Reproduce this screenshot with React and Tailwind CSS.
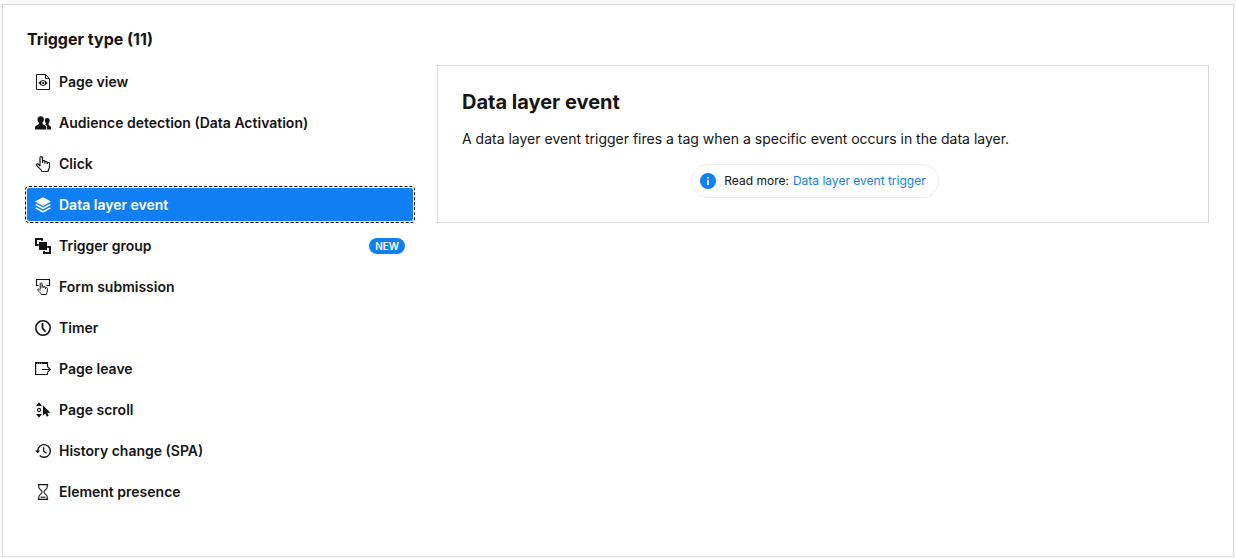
import React from "react";

function Icon({ children }) {
  return (
    <svg viewBox="0 0 16 16" className="size-4 shrink-0" fill="none" stroke="currentColor" aria-hidden="true">
      {children}
    </svg>
  );
}

const icons = {
  page: (
    <Icon>
      <path d="M1.500 .5h9L14.500 4.500v11h-13z" strokeWidth="1" />
      <path d="M10.500 .5v4h4" strokeWidth="1" />
      <path d="M3.400 9Q8 3 12.600 9 8 15 3.400 9z" fill="currentColor" stroke="none" />
      <circle cx="8" cy="9" r="2" fill="white" stroke="none" />
      <circle cx="8" cy="9" r="1.100" fill="currentColor" stroke="none" />
    </Icon>
  ),
  audience: (
    <Icon>
      <g fill="currentColor" stroke="none">
        <path d="M5.700 1.200c2.200 0 3.300 1.300 3.200 3.100-.1 1.600-.7 2.600-1.300 3.300v1.400c0 .7 3.700 1.300 3.700 3.400v2.200H0v-2.200c0-2.100 3.800-2.500 3.800-3.400V7.600C3.200 6.900 2.600 5.900 2.500 4.300 2.400 2.500 3.500 1.200 5.700 1.200z" />
        <path d="M12.100 3c1.900 0 2.700 1.100 2.600 2.600-.1 1.300-.5 2.200-1.100 2.800v1.300c0 .7 2.400 1 2.400 2.700v2.200h-3.900v-2.300c0-1.400-1-2.300-1.900-2.800.6-.2.800-.5.800-1V8.400c-.6-.6-1.100-1.500-1.200-2.800C9.700 4.100 10.400 3 12.100 3z" />
      </g>
    </Icon>
  ),
  click: (
    <Icon>
      <path
        d="M5 10.200V1.900a1.250 1.250 0 0 1 2.500 0v5M7.500 5.300c.2-.9 2.200-.9 2.400.2v1.900M9.900 6c.3-.8 2.100-.7 2.300.3v1.600M12.200 6.900c.4-.8 2.300-.5 2.300.7v3.100c0 1.700-1.200 2.500-1.500 4.800H6.900C6.500 13.400 3 11.600 1.700 9.300c-.7-1.300.9-2 1.700-1.100L5 10.100"
        strokeWidth="1.200"
        strokeLinejoin="round"
      />
    </Icon>
  ),
  layers: (
    <Icon>
      <g fill="currentColor" stroke="none">
        <path d="M8 .2 16 4.600 8 9 0 4.600z" />
        <path d="M1.600 7 8 10.500 14.400 7 16 7.900 8 12.300 0 7.900z" />
        <path d="M1.600 10.400 8 13.900l6.400-3.500 1.600.9-8 4.400-8-4.400z" />
      </g>
    </Icon>
  ),
  group: (
    <Icon>
      <path d="M4 4h8v8H4z" fill="currentColor" stroke="none" />
      <path d="M7 2.800V1H1v6h2.800M9 13.200V15h6V9h-2.800" strokeWidth="2" />
    </Icon>
  ),
  form: (
    <Icon>
      <path d="M3.500 6.500h-2v-6h13v6h-3" strokeWidth="1.200" />
      <path
        d="M5.200 10.700V4.800c0-1.200 1.800-1.200 1.800 0v4M7 7.300c.3-.6 1.700-.5 1.800.3v1.600M8.800 8c.4-.5 1.600-.4 1.700.4V10M10.500 8.700c.5-.5 1.900-.2 1.900.8v2.300c0 1.500-.9 2-1.100 3.700H6.200c-.3-1.600-2.400-2.700-3.300-4.300-.5-1 .6-1.500 1.200-.9l1.100 1.100"
        strokeLinejoin="round"
        strokeWidth="1"
      />
    </Icon>
  ),
  timer: (
    <Icon>
      <circle cx="8" cy="8" r="7.200" strokeWidth="1.600" />
      <path d="M7.500 3v5l3 3.800" strokeWidth="1.800" />
    </Icon>
  ),
  leave: (
    <Icon>
      <path d="M12.500 5.500v-4H.6v12h11.900v-1.500" strokeWidth="1.200" />
      <path d="M1 2h11.500" strokeWidth="2" />
      <path d="M2 2.300h1M4 2.300h1M6 2.300h1" stroke="white" strokeWidth="0.600" />
      <path d="M7 8.500h8.300M12.200 5.400l3.100 3.100-3.100 3.100" strokeWidth="1.200" />
    </Icon>
  ),
  scroll: (
    <Icon>
      <g fill="currentColor" stroke="none">
        <path d="M4 .3 6.900 4H1.100zM4 15.700 1.100 12h5.800z" />
        <path d="M7.900 3.200v10.500l2.400-2.100 1.400 3.100 2-.9-1.400-3h3.200z" />
      </g>
      <circle cx="4" cy="8" r="1.600" strokeWidth="1.100" />
    </Icon>
  ),
  history: (
    <Icon>
      <path d="M2.700 8a6.300 6.300 0 1 1 2 4.600" strokeWidth="1.400" />
      <path d="M.1 7.400h5L2.600 10.400z" fill="currentColor" stroke="none" />
      <path d="M8.700 4.200v4l2.900 2" strokeWidth="1.300" />
    </Icon>
  ),
  hourglass: (
    <Icon>
      <path d="M2.800.6h10.400M2.800 15.400h10.400" strokeWidth="1.200" />
      <path d="M3.800.8v2.400c0 2 3.300 3.300 3.300 4.800s-3.300 2.800-3.300 4.800v2.400M12.200.8v2.400c0 2-3.300 3.300-3.300 4.800s3.300 2.800 3.300 4.800v2.400" strokeWidth="1.100" />
      <path d="M5.500 13.200h5" strokeWidth="1.100" />
    </Icon>
  ),
};

const triggers = [
  { icon: "page", label: "Page view" },
  { icon: "audience", label: "Audience detection (Data Activation)" },
  { icon: "click", label: "Click" },
  { icon: "layers", label: "Data layer event", selected: true },
  { icon: "group", label: "Trigger group", isNew: true },
  { icon: "form", label: "Form submission" },
  { icon: "timer", label: "Timer" },
  { icon: "leave", label: "Page leave" },
  { icon: "scroll", label: "Page scroll" },
  { icon: "history", label: "History change (SPA)" },
  { icon: "hourglass", label: "Element presence" },
];

function TriggerItem({ icon, label, selected, isNew }) {
  return (
    <li>
      <button
        type="button"
        aria-pressed={Boolean(selected)}
        className={
          selected
            ? "flex h-[33px] w-full items-center gap-2 rounded-xs bg-[#117ff4] px-2 text-left text-white outline-1 outline-offset-1 outline-dashed outline-black"
            : "flex h-[33px] w-full items-center gap-2 rounded-xs px-2 text-left"
        }
      >
        {icons[icon]}
        <span className="grow text-sm font-semibold">{label}</span>
        {isNew && (
          <span className="rounded-full bg-[#117ff4] px-1.5 text-[10px] leading-4 font-semibold text-white">NEW</span>
        )}
      </button>
    </li>
  );
}

export default function App() {
  return (
    <div className="min-h-screen bg-[#fafafa] px-0.5 pt-1 pb-px font-['Inter',sans-serif] text-[#141414]">
      <main className="border border-[#dadada] bg-white px-6 pt-6 pb-12">
        <h2 className="text-base leading-5 font-bold">Trigger type (11)</h2>
        <div className="mt-4 grid grid-cols-[1fr_2fr] items-start gap-6">
          <ul className="flex flex-col gap-2">
            {triggers.map((trigger) => (
              <TriggerItem key={trigger.label} {...trigger} />
            ))}
          </ul>
          <section className="border border-[#dadada] p-6">
            <h3 className="text-xl leading-6 font-bold">Data layer event</h3>
            <p className="mt-[15px] text-sm">
              A data layer event trigger fires a tag when a specific event occurs in the data layer.
            </p>
            <div className="mt-[15px] mr-4 flex justify-center">
              <div className="flex h-[34px] items-center gap-2 rounded-full border border-[#ececec] pr-3 pl-2 text-xs">
                <svg viewBox="0 0 16 16" className="size-4" aria-hidden="true">
                  <circle cx="8" cy="8" r="8" fill="#117ff4" />
                  <path d="M7.200 4h1.600v1.600H7.200zM7.200 6.700h1.600V12H7.200z" fill="white" />
                </svg>
                <span className="flex gap-1">
                  <span>Read more:</span>
                  <a href="#data-layer-event-trigger" className="text-[#117ff4]">
                    Data layer event trigger
                  </a>
                </span>
              </div>
            </div>
          </section>
        </div>
      </main>
    </div>
  );
}
